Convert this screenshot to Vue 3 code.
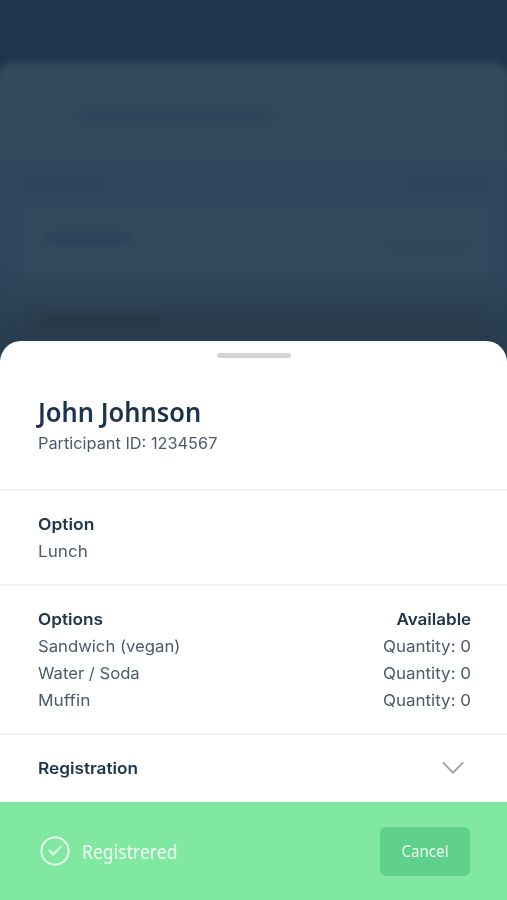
<script setup>
const options = [
  { name: 'Sandwich (vegan)', quantity: 0, cls: 'w-sandwich' },
  { name: 'Water / Soda', quantity: 0, cls: 'w-water' },
  { name: 'Muffin', quantity: 0, cls: 'w-muffin' },
]
</script>

<template>
  <div class="screen">
    <div class="backdrop" aria-hidden="true">
      <div class="page">
        <div class="page-head"><i class="smudge title"></i></div>
        <div class="page-body">
          <div class="page-row"><i class="smudge left"></i><i class="smudge right"></i></div>
          <div class="card"><i class="smudge name"></i><i class="smudge status"></i></div>
          <div class="card next"><i class="smudge name wide"></i></div>
        </div>
      </div>
      <div class="shade"></div>
    </div>

    <main class="sheet">
      <div class="handle"></div>
      <header class="section person">
        <h1>John Johnson</h1>
        <p class="w-id">Participant ID: 1234567</p>
      </header>
      <section class="section">
        <h2 class="w-option">Option</h2>
        <p class="w-lunch">Lunch</p>
      </section>
      <section class="section">
        <div class="row">
          <h2>Options</h2>
          <h2 class="w-available">Available</h2>
        </div>
        <div v-for="o in options" :key="o.name" class="row">
          <p :class="o.cls">{{ o.name }}</p>
          <p class="w-quantity">Quantity: {{ o.quantity }}</p>
        </div>
      </section>
      <section class="section row toggle">
        <h2>Registration</h2>
        <svg class="chevron" width="24" height="14" viewBox="0 0 24 14">
          <path d="M1.8 1.3 12 11.7 22.2 1.3" fill="none" stroke="#9c9ea1" stroke-width="1.7" />
        </svg>
      </section>
      <footer class="footer">
        <svg width="30" height="30" viewBox="0 0 30 30" fill="none" stroke="#f2fff4">
          <circle cx="15" cy="15" r="13.6" stroke-width="1.8" />
          <path d="M9.4 14.6 13.2 18.4 20.6 10.8" stroke-width="1.9" stroke-linecap="round" stroke-linejoin="round" />
        </svg>
        <span class="registered">Registrered</span>
        <button type="button"><span>Cancel</span></button>
      </footer>
    </main>
  </div>
</template>

<style>
body { margin: 0; }
</style>

<style scoped>
.screen {
  display: grid;
  width: 507px;
  height: 900px;
  overflow: hidden;
  font-family: Inter, "Liberation Sans", sans-serif;
}
.backdrop {
  grid-area: 1 / 1;
  position: relative;
  height: 380px;
  overflow: hidden;
  background: #1e354d;
}
.page {
  margin: 62px -4px 0;
  border-radius: 20px 20px 0 0;
  background: #31465e;
  overflow: hidden;
  filter: blur(3px);
}
.page-head {
  display: flex;
  height: 98px;
  padding: 48px 0 0 81px;
  box-sizing: border-box;
  background: #34495d;
}
.page-body { height: 260px; padding: 0 24px 0 28px; }
.page-row {
  display: flex;
  justify-content: space-between;
  align-items: center;
  height: 49px;
}
.card {
  display: flex;
  justify-content: space-between;
  height: 76px;
  padding: 24px 20px 0;
  box-sizing: border-box;
  background: #33495d;
}
.card.next { margin-top: 24px; padding-top: 6px; background: #2f4456; }
.smudge {
  display: block;
  height: 11px;
  border-radius: 5px;
  filter: blur(3px);
  background: #30435c;
}
.title { width: 197px; }
.left { width: 78px; background: #30445d; }
.right { width: 76px; background: #30445d; }
.name { width: 88px; background: #2e425b; }
.name.wide { width: 116px; background: #233743; }
.status { width: 78px; margin-top: 7px; background: #2f485c; }
.shade {
  position: absolute;
  inset: 265px 0 0;
  background: linear-gradient(rgba(36, 55, 70, 0), rgba(36, 55, 70, 0.65) 76px);
}
.sheet {
  grid-area: 1 / 1;
  align-self: end;
  display: flex;
  flex-direction: column;
  height: 559.5px;
  border-radius: 21px 21px 0 0;
  background: #fff;
  position: relative;
  overflow: hidden;
}
.handle {
  flex: none;
  align-self: center;
  width: 74px;
  height: 5px;
  margin: 12px 0 0;
  border-radius: 3px;
  background: #d2d4d7;
}
.section {
  padding: 20px 36px 19px 38px;
  border-bottom: 2px solid #f0f1f2;
}
.person { padding: 35.5px 36px 31.5px 38px; }
h1, h2, p {
  margin: 0;
  width: max-content;
  white-space: nowrap;
  transform-origin: left;
}
h1 {
  font: 600 27.5px/37px "Noto Sans", sans-serif;
  color: #1b334d;
  transform: scaleX(0.925);
}
h2 {
  font-size: 16px;
  line-height: 27px;
  font-weight: 600;
  color: #20364d;
  transform: scaleX(1.075);
}
p { font-size: 16px; line-height: 27px; color: #4b5a6c; }
.w-id { transform: scaleX(1.02); }
.w-option { transform: scaleX(1.09); }
.w-lunch { transform: scaleX(1.07); }
.w-sandwich { transform: scaleX(1.043); }
.w-water { transform: scaleX(1.04); }
.w-muffin { transform: scaleX(1.08); }
.w-available { transform: scaleX(1.065); transform-origin: right; }
.w-quantity { transform: scaleX(1.06); transform-origin: right; }
.row { display: flex; justify-content: space-between; align-items: center; }
.toggle { border-bottom: 0; padding-bottom: 20.5px; }
.chevron { margin-right: 6px; }
.footer {
  flex: 1;
  display: flex;
  align-items: center;
  padding: 0 37px 0 39.5px;
  background: #80e8a1;
  color: #f2fff4;
}
.registered {
  margin: 2px 0 0 12px;
  font: 400 20px/28px "Noto Sans", sans-serif;
  transform: scaleX(0.88);
  transform-origin: left;
}
button {
  margin-left: auto;
  width: 90px;
  height: 49px;
  padding: 0;
  border: 0;
  border-radius: 6px;
  background: #5fd18d;
  color: #f2fff4;
  font: 400 17px/24px "Noto Sans", sans-serif;
}
button span { display: block; transform: scaleX(0.89); }
</style>
